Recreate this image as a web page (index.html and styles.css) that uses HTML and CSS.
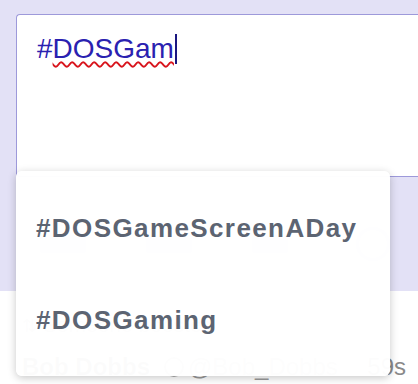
FILE: index.html
```html
<!DOCTYPE html>
<html lang="en">
<head>
  <meta charset="UTF-8" />
  <meta name="viewport" content="width=device-width, initial-scale=1.0"/>
  <title>Compose</title>
  <link rel="stylesheet" href="styles.css">
</head>
<body>

  <div class="compose">
    <div class="field">
      <div class="input"><span>#</span><span class="misspelt">DOSGam</span><span class="caret"></span></div>
    </div>
    <div class="toolbar">
      <span class="tool"></span>
      <span class="tool"></span>
      <span class="tool small"></span>
      <span class="counter"></span>
    </div>
  </div>

  <div class="status">
    <div class="boost"><span class="boost-icon">&#8645;</span> Someone boosted</div>
    <div class="author">
      <strong>Bob Dobbs</strong>
      <span class="handle"><span class="ring"></span>@Bob_Dobbs</span>
      <span class="time">59s</span>
    </div>
  </div>

  <!-- autocomplete menu, sits over the compose box -->
  <ul class="suggestions">
    <li class="suggestion">#DOSGameScreenADay</li>
    <li class="suggestion">#DOSGaming</li>
  </ul>

</body>
</html>
```

FILE: styles.css
```css
html, body {
  height: 384px;
}

body {
  margin: 0;
  font-family: "Liberation Sans", Arial, sans-serif;
  background-color: white;
  overflow: hidden;
  position: relative;
}

.compose {
  background-color: #e3e1f6;
  height: 291px;
  box-sizing: border-box;
  padding: 14px 0 0 16px;
}

.field {
  width: 420px;
  height: 163px;
  box-sizing: border-box;
  background-color: white;
  border: 1px solid #9d99da;
  border-right: none;
  border-radius: 4px 0 0 4px;
  padding: 18px 0 0 20px;
}

.input {
  font-size: 28px;
  line-height: 32px;
  color: #2a21b0;
  display: flex;
  align-items: center;
}

.misspelt {
  text-decoration: underline wavy #d8141c;
  text-decoration-thickness: 1.5px;
  text-underline-offset: 3px;
}

.caret {
  width: 2px;
  height: 30px;
  background-color: #1a1780;
  margin-left: 1px;
}

.toolbar {
  display: flex;
  align-items: center;
  gap: 60px;
  padding: 50px 0 0 24px;
}

.tool {
  width: 46px;
  height: 18px;
  border-radius: 4px;
  background-color: #b8c2f0;
}

.tool.small {
  width: 36px;
}

.counter {
  width: 28px;
  height: 28px;
  border: 3px solid #c6cdf3;
  border-radius: 50%;
  margin-left: 8px;
}

.status {
  padding: 22px 0 0 22px;
  color: #666;
}

.boost {
  font-size: 21px;
  color: #9a9a9a;
}

.boost-icon {
  font-size: 18px;
}

.author {
  display: flex;
  align-items: center;
  gap: 14px;
  margin-top: 16px;
  font-size: 24px;
}

.handle {
  display: flex;
  align-items: center;
  gap: 4px;
  color: #9a9a9a;
}

.ring {
  width: 16px;
  height: 16px;
  border: 2px solid #aaa;
  border-radius: 50%;
}

.time {
  color: #8a8a8a;
  margin-left: auto;
  margin-right: 12px;
}

.suggestions {
  position: absolute;
  left: 16px;
  top: 171px;
  width: 374px;
  height: 205px;
  box-sizing: border-box;
  margin: 0;
  padding: 11px 0 10px;
  list-style: none;
  background-color: rgba(255, 255, 255, 0.975);
  border-radius: 6px;
  box-shadow: 0 2px 8px rgba(0, 0, 0, 0.22);
}

.suggestion {
  height: 92px;
  display: flex;
  align-items: center;
  padding-left: 20px;
  font-size: 26px;
  font-weight: bold;
  letter-spacing: 1.4px;
  color: #5c6472;
}
```
